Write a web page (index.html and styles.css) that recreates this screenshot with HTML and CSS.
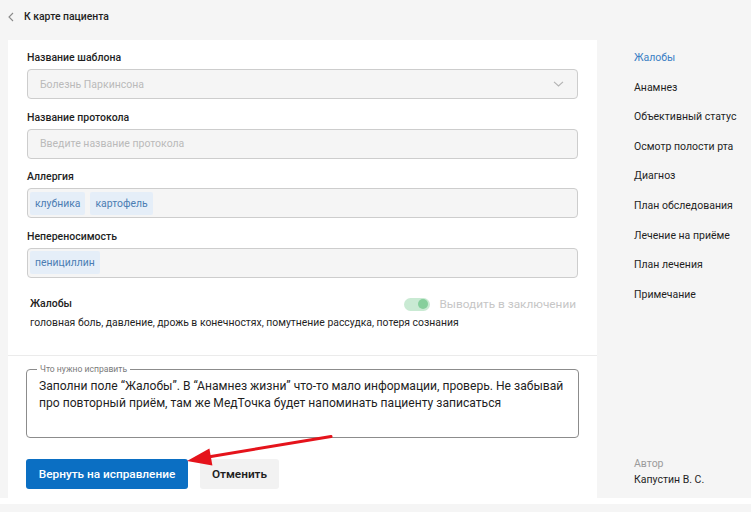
FILE: index.html
```html
<!DOCTYPE html>
<html lang="ru">
<head>
<meta charset="utf-8">
<title>Протокол</title>
<link rel="stylesheet" href="styles.css">
</head>
<body>
<div class="page">
  <header class="top">
    <svg class="back-ico" width="6" height="10" viewBox="0 0 6 10"><path d="M5 1L1 5l4 4" fill="none" stroke="#8a8a8a" stroke-width="1.1"/></svg>
    <span class="back-text">К карте пациента</span>
  </header>
  <div class="layout">
    <main class="card">
      <div class="form">
        <div class="group">
          <div class="label">Название шаблона</div>
          <div class="input select">
            <span class="placeholder">Болезнь Паркинсона</span>
            <svg width="11" height="6" viewBox="0 0 11 6"><path d="M1 0.8l4.5 4.2 4.5-4.2" fill="none" stroke="#b3b3b3" stroke-width="1.1"/></svg>
          </div>
        </div>
        <div class="group">
          <div class="label">Название протокола</div>
          <div class="input"><span class="placeholder">Введите название протокола</span></div>
        </div>
        <div class="group">
          <div class="label">Аллергия</div>
          <div class="input chips"><span class="chip">клубника</span><span class="chip">картофель</span></div>
        </div>
        <div class="group">
          <div class="label">Непереносимость</div>
          <div class="input chips"><span class="chip">пенициллин</span></div>
        </div>
        <section class="complaints">
          <div class="complaints-head">
            <span class="complaints-title">Жалобы</span>
            <span class="switch-wrap"><span class="switch"><span class="knob"></span></span><span class="switch-label">Выводить в заключении</span></span>
          </div>
          <p class="complaints-text">головная боль, давление, дрожь в конечностях, помутнение рассудка, потеря сознания</p>
        </section>
      </div>
      <div class="bottom">
        <fieldset class="comment">
          <legend>Что нужно исправить</legend>
          <div class="comment-text">Заполни поле “Жалобы”. В “Анамнез жизни” что-то мало информации, проверь. Не забывай про повторный приём, там же МедТочка будет напоминать пациенту записаться</div>
        </fieldset>
        <div class="actions">
          <button class="btn primary">Вернуть на исправление</button>
          <button class="btn secondary">Отменить</button>
        </div>
      </div>
    </main>
    <aside class="side">
      <nav class="nav">
        <a class="nav-item active">Жалобы</a>
        <a class="nav-item">Анамнез</a>
        <a class="nav-item">Объективный статус</a>
        <a class="nav-item">Осмотр полости рта</a>
        <a class="nav-item">Диагноз</a>
        <a class="nav-item">План обследования</a>
        <a class="nav-item">Лечение на приёме</a>
        <a class="nav-item">План лечения</a>
        <a class="nav-item">Примечание</a>
      </nav>
      <div class="author">
        <div class="author-label">Автор</div>
        <div class="author-name">Капустин В. С.</div>
      </div>
    </aside>
  </div>
  <svg class="arrow" width="751" height="512" viewBox="0 0 751 512">
    <line x1="331" y1="436.5" x2="205" y2="457.5" stroke="#e5131b" stroke-width="3" stroke-linecap="round"/>
    <polygon points="187,461 209.4,448.6 212.4,465.4" fill="#e5131b"/>
  </svg>
</div>
<div class="band"></div>
</body>
</html>
```
FILE: styles.css
```css
* { box-sizing: border-box; }
html, body { margin: 0; padding: 0; }
body {
  background: #f5f5f5;
  font-family: Roboto, "Noto Sans", Arial, sans-serif;
  color: #222;
  width: 751px;
  height: 512px;
  overflow: hidden;
}
.page {
  position: relative;
  height: 498px;
  display: flex;
  flex-direction: column;
}
.top {
  height: 40px;
  display: flex;
  align-items: center;
  padding: 0 0 6px 8px;
}
.back-ico { margin-right: 10px; }
.back-text { font-size: 10.4px; font-weight: 500; line-height: 14px; color: #1f1f1f; }
.layout {
  flex: 1;
  display: flex;
}
.card {
  margin-left: 8px;
  width: 589px;
  background: #fff;
  display: flex;
  flex-direction: column;
}
.form {
  padding: 11px 19px 0 19px;
  border-bottom: 1px solid #ebebeb;
  height: 316px;
}
.group { margin-bottom: 11.5px; }
.label {
  font-size: 10.5px;
  font-weight: 500;
  line-height: 14px;
  color: #1f1f1f;
  margin-bottom: 4px;
}
.input {
  height: 30px;
  border: 1px solid #cdcdcd;
  border-radius: 4px;
  background: #f5f5f5;
  display: flex;
  align-items: center;
  padding: 0 12px;
}
.select { justify-content: space-between; padding-right: 13px; }
.placeholder { font-size: 10.5px; color: #bababa; }
.chips { padding: 0 2px; gap: 5px; }
.chip {
  height: 23px;
  display: inline-flex;
  align-items: center;
  padding: 0 5px;
  background: #e5eef8;
  color: #4b7db3;
  font-size: 10.4px;
  border-radius: 2px;
}
.complaints { padding: 8px 0 0 3px; }
.complaints-head {
  display: flex;
  justify-content: space-between;
  align-items: center;
  height: 14px;
}
.complaints-title { font-size: 10.5px; font-weight: 500; line-height: 14px; }
.switch-wrap { display: flex; align-items: center; margin-right: 2px; }
.switch {
  width: 26px;
  height: 13px;
  border-radius: 7px;
  background: #c9ead3;
  position: relative;
  margin-right: 10px;
}
.knob {
  position: absolute;
  right: 2px;
  top: 1.5px;
  width: 10px;
  height: 10px;
  border-radius: 50%;
  background: #86cf9c;
}
.switch-label { font-size: 11.8px; color: #c6c6c6; line-height: 14px; }
.complaints-text {
  margin: 5px 0 0 0;
  font-size: 10.4px;
  line-height: 14px;
  color: #1f1f1f;
}
.bottom { padding: 8px 18px 0 18px; }
.comment {
  margin: 0;
  border: 1px solid #8c8c8c;
  border-radius: 4px;
  padding: 0 12px;
  height: 74px;
}
.comment legend {
  font-size: 8.6px;
  line-height: 10px;
  color: #7a7a7a;
  padding: 0 3px;
  margin-left: -2px;
}
.comment-text {
  font-size: 12.1px;
  line-height: 17px;
  color: #1f1f1f;
  padding-top: 4px;
}
.actions {
  display: flex;
  gap: 12px;
  margin-top: 21px;
}
.btn {
  height: 30px;
  border: none;
  border-radius: 3px;
  font-family: Roboto, "Noto Sans", Arial, sans-serif;
  font-size: 11.8px;
  padding: 0;
}
.primary { width: 162px; background: #0b6fc3; color: #fff; font-weight: 500; }
.secondary { width: 79px; background: #f2f2f2; color: #1f1f1f; font-weight: 600; }
.side {
  flex: 1;
  padding: 3px 0 10px 37px;
  display: flex;
  flex-direction: column;
  justify-content: space-between;
}
.nav { display: flex; flex-direction: column; }
.nav-item {
  font-size: 10.5px;
  line-height: 29.6px;
  color: #1f1f1f;
}
.nav-item.active { color: #3b7fc4; }
.author-label { font-size: 10.5px; line-height: 16px; color: #9b9b9b; }
.author-name { font-size: 10.5px; line-height: 16px; color: #1f1f1f; }
.arrow {
  position: absolute;
  left: 0;
  top: 0;
  pointer-events: none;
}
.band { height: 6px; background: #fff; }
```
